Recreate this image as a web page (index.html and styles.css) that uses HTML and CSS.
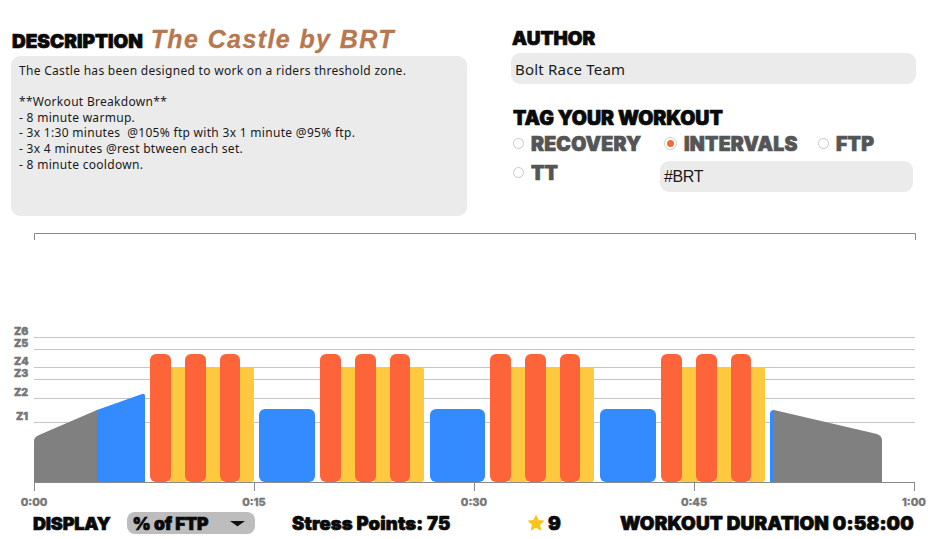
FILE: index.html
```html
<!DOCTYPE html>
<html>
<head>
<meta charset="utf-8">
<link rel="stylesheet" href="styles.css">
</head>
<body>
<div class="page">
  <div class="top">
    <div class="col-left">
      <h2 class="heading">DESCRIPTION <span class="title">The Castle by BRT</span></h2>
      <div class="desc">The Castle has been designed to work on a riders threshold zone.<br><br>**Workout Breakdown**<br>- 8 minute warmup.<br>- 3x 1:30 minutes&nbsp; @105% ftp with 3x 1 minute @95% ftp.<br>- 3x 4 minutes @rest btween each set.<br>- 8 minute cooldown.</div>
    </div>
    <div class="col-right">
      <h2 class="heading">AUTHOR</h2>
      <div class="field author">Bolt Race Team</div>
      <h2 class="heading tag-head">TAG YOUR WORKOUT</h2>
      <div class="tags">
        <div class="tag"><span class="radio"></span>RECOVERY</div>
        <div class="tag"><span class="radio on"></span>INTERVALS</div>
        <div class="tag"><span class="radio"></span>FTP</div>
        <div class="tag"><span class="radio"></span>TT</div>
        <div class="field hash">#BRT</div>
      </div>
    </div>
  </div>
  <svg class="chart" width="937" height="287" viewBox="0 225 937 287" xmlns="http://www.w3.org/2000/svg">
    <g stroke="#8a8a8a" stroke-width="1" fill="none">
      <path d="M34.5 240 V233.5 H915.5 V240"/>
    </g>
    <g stroke="#c4c4c4" stroke-width="1">
      <line x1="34" y1="337.5" x2="915" y2="337.5"/>
      <line x1="34" y1="349.5" x2="915" y2="349.5"/>
      <line x1="34" y1="367.5" x2="915" y2="367.5"/>
      <line x1="34" y1="379.5" x2="915" y2="379.5"/>
      <line x1="34" y1="398.5" x2="915" y2="398.5"/>
      <line x1="34" y1="422.5" x2="915" y2="422.5"/>
    </g>
    <g class="zl">
      <text x="14" y="335">Z6</text>
      <text x="14" y="347">Z5</text>
      <text x="14" y="365">Z4</text>
      <text x="14" y="377">Z3</text>
      <text x="14" y="396">Z2</text>
      <text x="16" y="420">Z1</text>
    </g>
    <!-- warmup -->
    <path fill="#808080" d="M34 482 V441 Q34 437 39 435 L97 410 V482 Z"/>
    <path fill="#338bff" d="M97 482 V410 L142 394 Q145 393 145 396 V482 Z"/>
    <!-- sets -->
    <g id="set">
      <rect x="168" y="367" width="20" height="115" rx="3" fill="#fec83f"/>
      <rect x="203" y="367" width="20" height="115" rx="3" fill="#fec83f"/>
      <rect x="237" y="367" width="17" height="115" rx="3" fill="#fec83f"/>
      <rect x="150" y="354" width="21" height="128" rx="6" fill="#fe6439"/>
      <rect x="185" y="354" width="21" height="128" rx="6" fill="#fe6439"/>
      <rect x="220" y="354" width="20" height="128" rx="6" fill="#fe6439"/>
    </g>
    <use href="#set" x="170"/>
    <use href="#set" x="340"/>
    <use href="#set" x="511"/>
    <!-- rests -->
    <rect x="259" y="409" width="56" height="73" rx="6" fill="#338bff"/>
    <rect x="430" y="409" width="55" height="73" rx="6" fill="#338bff"/>
    <rect x="600" y="409" width="56" height="73" rx="6" fill="#338bff"/>
    <!-- cooldown -->
    <path fill="#338bff" d="M770 482 V414 Q770 410 774 410 V482 Z"/>
    <path fill="#808080" d="M774 482 V410 L877 434 Q882 436 882 440 V482 Z"/>
    <!-- axis -->
    <g stroke="#8a8a8a" stroke-width="1">
      <line x1="34" y1="482.5" x2="915" y2="482.5"/>
      <line x1="34.5" y1="482" x2="34.5" y2="491"/>
      <line x1="254.5" y1="482" x2="254.5" y2="491"/>
      <line x1="474.5" y1="482" x2="474.5" y2="491"/>
      <line x1="694.5" y1="482" x2="694.5" y2="491"/>
      <line x1="914.5" y1="482" x2="914.5" y2="491"/>
    </g>
    <g class="tl">
      <text x="34" y="506">0:00</text>
      <text x="254" y="506">0:15</text>
      <text x="474" y="506">0:30</text>
      <text x="694" y="506">0:45</text>
      <text x="914" y="506">1:00</text>
    </g>
  </svg>
  <div class="bottom">
    <div class="display">
      <span class="blk">DISPLAY</span>
      <div class="select">% of FTP
        <svg class="caret" width="17" height="7" viewBox="0 0 17 7"><path d="M1 1 H16 L9 6 Q8.5 6.4 8 6 Z" fill="#111"/></svg>
      </div>
    </div>
    <div class="stress">Stress Points: 75</div>
    <div class="stars">
      <svg class="star" width="18" height="18" viewBox="0 0 24 24"><path d="M12 2.2 L14.9 8.6 L21.8 9.3 L16.6 14 L18.1 20.9 L12 17.4 L5.9 20.9 L7.4 14 L2.2 9.3 L9.1 8.6 Z" fill="#f8c41c" stroke="#f8c41c" stroke-width="1.5" stroke-linejoin="round"/></svg>
      <span>9</span>
    </div>
    <div class="duration">WORKOUT DURATION 0:58:00</div>
  </div>
</div>
</body>
</html>
```
FILE: styles.css
```css
* { box-sizing: border-box; }
html, body { margin: 0; padding: 0; background: #fff; }
body { font-family: Inter, "Noto Sans", sans-serif; color: #111; }
.page { width: 937px; height: 539px; overflow: hidden; }

.top {
  display: flex;
  height: 225px;
  padding: 27px 0 0 11px;
  gap: 44px;
}
.col-left { width: 456px; }
.col-right { width: 405px; }

.heading, .tag, .bottom {
  -webkit-text-stroke: 0.7px currentColor;
}

.heading {
  margin: 0 0 2px 1px;
  font-family: Inter, sans-serif;
  font-weight: 900;
  font-size: 19px;
  line-height: 24px;
  letter-spacing: 0;
  color: #0a0a0a;
  white-space: nowrap;
}
.title {
  font-family: "Liberation Sans", Arial, sans-serif;
  font-style: italic;
  font-weight: 700;
  font-size: 25px;
  letter-spacing: 1.4px;
  color: #b7774f;
  margin-left: 4px;
  -webkit-text-stroke: 0.3px currentColor;
}
.desc {
  height: 160px;
  background: #ebebeb;
  border-radius: 9px;
  padding: 7px 8px;
  font-family: "Noto Sans", sans-serif;
  font-size: 12px;
  line-height: 15.6px;
  color: #1a1a1a;
  letter-spacing: 0.3px;
}
.field {
  background: #ebebeb;
  border-radius: 9px;
  height: 31px;
  display: flex;
  align-items: center;
  padding-left: 4px;
  font-family: "Noto Sans", sans-serif;
  font-size: 15px;
  letter-spacing: 0.2px;
  color: #1a1a1a;
}
.author { width: 405px; }
.tag-head { margin-top: 22px; margin-left: 2px; margin-bottom: -1px; font-size: 19.5px; }

.tags {
  display: grid;
  grid-template-columns: 147px 158px 94px;
  grid-template-rows: 29px 34px;
  margin-left: 2px;
}
.tag {
  display: flex;
  align-items: center;
  font-family: Inter, sans-serif;
  font-weight: 900;
  font-size: 19.5px;
  letter-spacing: 0.2px;
  color: #555;
  height: 29px;
}
.radio {
  width: 11px;
  height: 11px;
  border-radius: 50%;
  border: 1px solid #c8c8c8;
  background: #fff;
  margin: 0 7px 0 0;
  flex: none;
  position: relative;
  -webkit-text-stroke: 0;
}
.radio.on {
  width: 13px;
  height: 13px;
  margin-left: 4px;
  border-color: #d8cbc5;
}
.radio.on::after {
  content: "";
  position: absolute;
  left: 2px; top: 2px;
  width: 7px; height: 7px;
  border-radius: 50%;
  background: #f06b3a;
}
.hash {
  grid-column: 2 / 4;
  align-self: start;
  width: 253px;
  margin-top: 3px;
  font-family: "Liberation Sans", Arial, sans-serif;
  font-size: 16px;
  letter-spacing: -0.4px;
  -webkit-text-stroke: 0;
}

.chart { display: block; }
.zl text {
  font-family: Inter, sans-serif;
  font-weight: 900;
  font-size: 10.5px;
  fill: #777;
  stroke: #777;
  stroke-width: 0.4px;
}
.tl text {
  font-family: Inter, sans-serif;
  font-weight: 800;
  font-size: 11px;
  fill: #777;
  stroke: #777;
  stroke-width: 0.3px;
  text-anchor: middle;
}

.bottom {
  display: flex;
  align-items: center;
  height: 24px;
  margin-top: -1px;
  padding-left: 33px;
  font-family: Inter, sans-serif;
  font-weight: 900;
  color: #0a0a0a;
}
.display { display: flex; align-items: center; width: 259px; }
.blk { font-size: 18px; letter-spacing: -0.2px; }
.select {
  margin-left: 16px;
  width: 128px;
  height: 22px;
  background: #bdbdbd;
  border-radius: 8px;
  display: flex;
  align-items: center;
  padding-left: 6px;
  font-size: 17.5px;
  letter-spacing: -0.2px;
}
.caret { margin-left: auto; margin-right: 9px; }
.stress { width: 235px; font-size: 18.5px; letter-spacing: 0.1px; }
.stars { display: flex; align-items: center; gap: 3px; width: 93px; font-size: 19px; }
.duration { font-size: 19px; letter-spacing: 0.1px; }
```
